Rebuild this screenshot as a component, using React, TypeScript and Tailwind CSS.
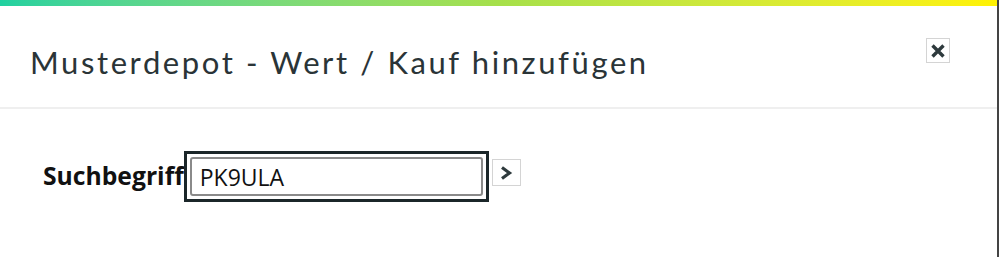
export default function App() {
  return (
    <div className="w-[999px] h-[257px] bg-white overflow-hidden flex">
      <div className="flex-1 flex flex-col">
        <div className="h-[6px] bg-gradient-to-r from-[#1fd1a0] via-[#a6e04a] to-[#fff200]" />
        <div className="h-[103px] flex items-start justify-between pl-[30px] pr-[47px] border-b-2 border-[#efefef]">
          <h1
            className="mt-[36px] text-[31px] leading-[40px] tracking-[2.6px] text-[#2a3437]"
            style={{ fontFamily: 'Lato, "Open Sans", sans-serif' }}
          >
            Musterdepot - Wert / Kauf hinzufügen
          </h1>
          <button className="mt-[32px] w-[24px] h-[25px] border border-[#d4d4d4] bg-white flex items-center justify-center">
            <svg width="16" height="16" viewBox="0 0 16 16">
              <path d="M2.5 2.5 L13.5 13.5 M13.5 2.5 L2.5 13.5" stroke="#2e3a3d" strokeWidth="3.4" />
            </svg>
          </button>
        </div>
        <div
          className="flex items-start pl-[43px] pt-[42px]"
          style={{ fontFamily: '"Open Sans", sans-serif' }}
        >
          <span className="mt-[8px] text-[24.7px] leading-[34px] font-bold text-[#111]">Suchbegriff</span>
          <div className="border-[3px] border-[#1b2629] p-[3px] bg-white">
            <input
              readOnly
              value="PK9ULA"
              className="w-[293px] h-[39px] border-2 border-[#8a8a8a] rounded-[3px] px-[8px] text-[23px] text-[#111] outline-none"
              style={{ fontFamily: '"Open Sans", sans-serif' }}
            />
          </div>
          <button className="mt-[8px] ml-[3px] w-[29px] h-[27px] border border-[#d4d4d4] bg-white flex items-center justify-center">
            <svg width="14" height="16" viewBox="0 0 14 16">
              <path d="M3 2.5 L10.5 8 L3 13.5" fill="none" stroke="#2e3a3d" strokeWidth="3.2" />
            </svg>
          </button>
        </div>
      </div>
      <div className="w-[2px] bg-[#444]" />
    </div>
  )
}
